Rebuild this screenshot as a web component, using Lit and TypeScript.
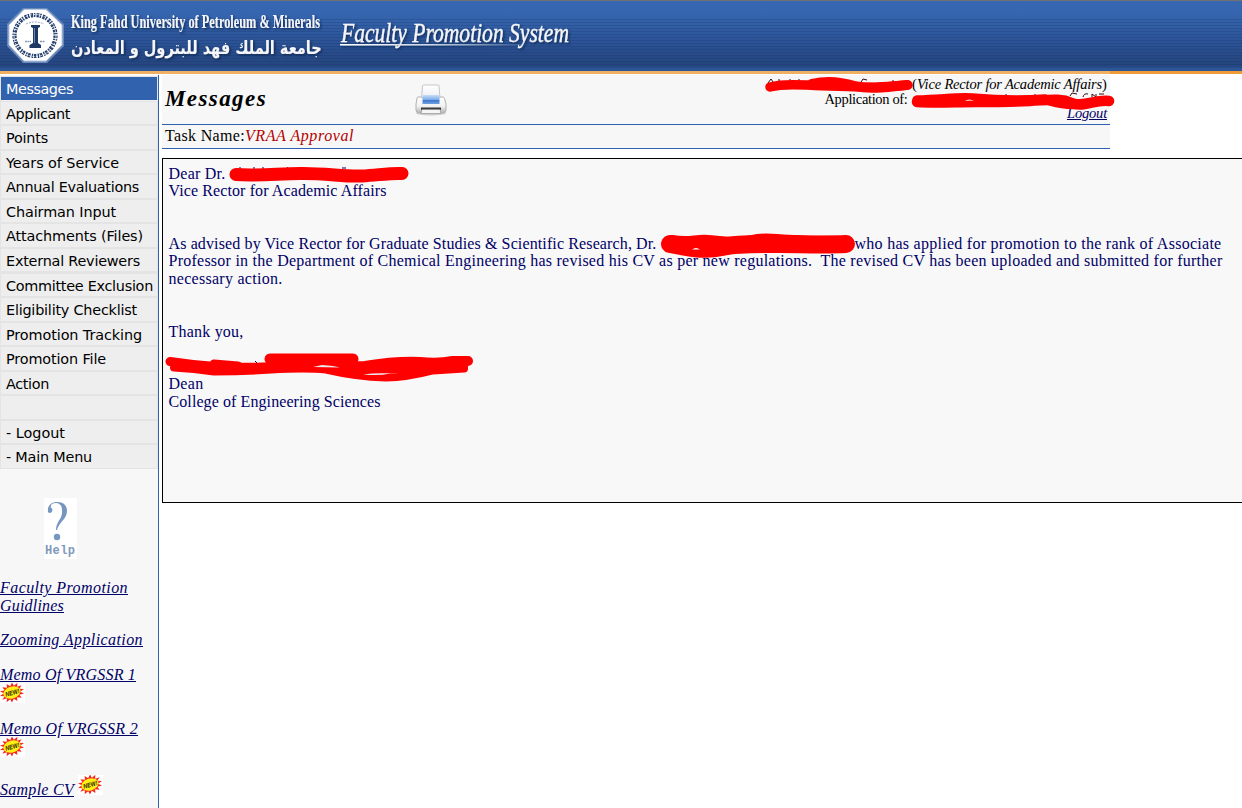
import { LitElement, html, svg, css } from "lit";
import { customElement, property } from "lit/decorators.js";
import { classMap } from "lit/directives/class-map.js";

/** A run of text whose tracking is adjusted so it fills the given width. */
@customElement("fit-text")
class FitText extends LitElement {
  @property() text = "";
  @property({ type: Number }) width = 0;

  static styles = css`
    :host { display: inline-block; white-space: pre; }
    .run { display: inline-block; text-decoration: inherit; }
  `;

  firstUpdated() {
    const run = this.renderRoot.querySelector(".run") as HTMLElement;
    const natural = run.getBoundingClientRect().width;
    run.style.letterSpacing = `${(this.width - natural) / this.text.length}px`;
  }

  render() {
    return html`<span class="run">${this.text}</span>`;
  }
}

const fit = (text: string, width: number) =>
  html`<fit-text .text=${text} .width=${width}></fit-text>`;

const menu: [string, number][] = [
  ["Messages", 67], ["Applicant", 64], ["Points", 42], ["Years of Service", 113],
  ["Annual Evaluations", 133], ["Chairman Input", 110], ["Attachments (Files)", 137],
  ["External Reviewers", 134], ["Committee Exclusion", 147], ["Eligibility Checklist", 131],
  ["Promotion Tracking", 136], ["Promotion File", 100], ["Action", 43], ["", 0],
  ["- Logout", 59], ["- Main Menu", 86],
];

const burst = (() => {
  const pts: string[] = [];
  for (let i = 0; i < 28; i++) {
    const a = (i / 28) * Math.PI * 2;
    const k = i % 2 ? 0.66 : 1;
    pts.push(`${(12 + 12.5 * k * Math.cos(a)).toFixed(1)},${(9.5 + 10 * k * Math.sin(a)).toFixed(1)}`);
  }
  return pts.join(" ");
})();

const newBadge = html`
  <svg class="new" width="25" height="20" viewBox="0 0 25 20">
    <rect width="25" height="20" fill="#fff" />
    <g transform="rotate(-16 12 9.5)">
      <polygon points=${burst} fill="#f5281e" />
      <ellipse cx="12" cy="9.5" rx="8.8" ry="6" fill="#ffee18" />
      <text x="5" y="12" font-size="6.5" font-weight="bold" textLength="14.5"
        lengthAdjust="spacingAndGlyphs" font-family="Liberation Sans, sans-serif" fill="#2a2200">NEW!</text>
    </g>
  </svg>`;

const seal = svg`
  <g>
    <polygon points="23,8 47,8 64,24 64,46 47,63 23,63 7,46 7,24" fill="#6988ba" />
    <polygon points="24,9.500 46,9.500 62,25 62,45 46,61 24,61 9,45 9,25" fill="#fff" stroke="#b9c9e2" stroke-width="1" />
    <circle cx="35" cy="35.500" r="20.500" fill="none" stroke="#26406f" stroke-width="4.200" stroke-dasharray="2.600 .8 1.500 1.200" />
    <circle cx="35" cy="35.500" r="21" fill="none" stroke="#fff" stroke-width=".8" stroke-dasharray="2.300 1.400" />
    <path d="M26 24q9-4 18 0" fill="none" stroke="#9aabc8" stroke-width="1" stroke-dasharray="2 1" />
    <path d="M31 25h9v2l-2 1v15l3 2v3H29.500v-3l3.500-2V28l-2-1z" fill="#1e3865" />
    <path d="M34.500 28v15" stroke="#7188b0" stroke-width="1" />
    <path d="M25 41.500h6M40 41.500h5" stroke="#8497b8" stroke-width="1.500" stroke-dasharray="2 .5" />
  </g>`;

const printer = html`
  <svg class="printer" width="34" height="32" viewBox="0 0 34 32">
    <defs>
      <linearGradient id="paper" x2="0" y2="1"><stop stop-color="#fff" /><stop offset="1" stop-color="#eceff3" /></linearGradient>
      <linearGradient id="body" x2="0" y2="1"><stop stop-color="#fff" /><stop offset=".6" stop-color="#f2f2f2" /><stop offset="1" stop-color="#b4b4b4" /></linearGradient>
      <linearGradient id="glass" x2="0" y2="1"><stop stop-color="#c8ddf7" /><stop offset=".5" stop-color="#80aee9" /><stop offset=".6" stop-color="#3e78cd" /><stop offset="1" stop-color="#70a1e2" /></linearGradient>
    </defs>
    <ellipse cx="17" cy="29" rx="15" ry="2.500" fill="#ccc" />
    <path d="M4 13h25q1 0 1.500 1.500L32 20v6q0 2.500-2.500 2.500h-25Q2 28.500 2 26v-6l1-5.500Q3 13 4 13z" fill="url(#body)" stroke="#b0b0b0" />
    <path d="M8.500 2q0-1 1-1h14.500q1 0 1 1l1 12H7.500z" fill="url(#paper)" stroke="#c2c6ca" />
    <path d="M8.500 11h17v9h-17z" fill="url(#glass)" />
    <path d="M7 23.500h20V26H7z" fill="#3b3b3b" />
    <path d="M8 25.500h18l1 4H7z" fill="#f5f5f5" stroke="#888" stroke-width=".6" />
  </svg>`;

@customElement("app-root")
class AppRoot extends LitElement {
  static styles = css`
    :host {
      display: block; width: 1242px; height: 808px; overflow: hidden; background: #fff;
      font-family: Georgia, "Liberation Serif", serif; font-size: 16px; color: #000;
    }
    .banner {
      height: 71px; box-sizing: border-box; border-top: 1px solid #717171;
      background:
        repeating-linear-gradient(rgba(15, 40, 95, 0) 0 2px, rgba(15, 40, 95, .2) 2px 3px) 0 16px / 100% 52px no-repeat,
        linear-gradient(#3867b1 0, #3565ae 20%, #2b5294 60%, #25457d 93%, #2b5595 95%);
    }
    .banner svg { display: block; margin-top: -1px; }
    .rule { height: 3px; background: linear-gradient(90deg, #efb064 1110px, #ef9b38 1110px); margin-bottom: 1px; }
    .page { display: flex; height: 733px; }
    aside { width: 158px; flex: none; border-right: 1px solid #2f62ae; background: #f7f7f7; }
    .menu {
      margin: 1px 0 0; padding: 0 1px; list-style: none; background: #e4e4e4; height: 393px;
      display: grid; grid-template-rows: repeat(16, 1fr); box-sizing: border-box;
      font: 14.4px/24.8px Verdana, "DejaVu Sans", sans-serif;
    }
    .menu li { border-top: 1px solid #e4e4e4; border-bottom: 1px solid #e4e4e4; background: #eee; padding-left: 5px; height: 22.56px; }
    .menu li.on { background: #3162ae; color: #fff; border-bottom-color: #f0f0f0; }
    .help { display: block; margin: 29px 0 0 44px; }
    .links { display: flex; flex-direction: column; margin-top: 20px; line-height: 18px; font-style: italic; color: #000066; }
    .link { display: flex; flex-direction: column; align-items: flex-start; text-decoration: none; color: inherit; }
    .link fit-text { height: 18px; text-decoration: underline; }
    .link + .link { margin-top: 16px; }
    .link.memo { margin-bottom: 1px; margin-top: 17px; }
    .link.memo + .memo { margin-top: 16px; }
    .link .new { display: block; margin-top: -1px; }
    .link.inline { flex-direction: row; align-items: flex-end; gap: 4px; margin-top: 18px; }
    .link.inline .new { margin-bottom: 4px; }
    main { flex: 1; min-width: 0; padding-left: 3px; }
    .head { width: 948px; height: 49px; background: #f7f7f7; border-bottom: 1px solid #2f62ae; display: flex; position: relative; }
    h1 { margin: 0; padding: 11px 0 0 3px; width: 249px; font: italic bold 23px/26px Georgia, "Liberation Serif", serif; }
    .printer { margin-top: 9px; }
    .user { margin-left: auto; padding: 2px 3px 0 0; font-size: 14.5px; line-height: 14.6px; display: flex; flex-direction: column; align-items: flex-end; }
    .user .second { padding-right: 199.500px; }
    .user a { color: #000066; font-style: italic; }
    .user a fit-text { text-decoration: underline; }
    .task { width: 948px; height: 23px; background: #f7f7f7; border-bottom: 1px solid #2f62ae; line-height: 22px; display: flex; }
    .task fit-text:first-child { margin-left: 3px; }
    .task .value { color: #b30000; font-style: italic; }
    .task .value fit-text { margin-left: 0; }
    .message {
      margin-top: 9px; height: 343px; border: 1px solid #000; border-right: 0; background: #f8f8f8;
      color: #000066; position: relative;
    }
    .letter { padding: 5.6px 0 0 5.5px; display: grid; grid-auto-rows: 17.55px; line-height: 17.55px; white-space: nowrap; }
    .row { display: flex; }
    .after { margin-left: 198px; }
    .ink { position: absolute; left: 0; top: 0; overflow: visible; pointer-events: none; }
  `;

  render() {
    return html`
      <header class="banner">
        <svg width="600" height="71" viewBox="0 0 600 71">
          <defs>
            <filter id="drop" x="-5%" y="-20%" width="110%" height="150%">
              <feDropShadow dx="1.500" dy="1.500" stdDeviation=".8" flood-color="#10264f" flood-opacity=".85" />
            </filter>
            <linearGradient id="fade"><stop stop-color="#fff" /><stop offset=".5" stop-color="#c8d3e6" /><stop offset="1" stop-color="#c8d3e6" stop-opacity="0" /></linearGradient>
          </defs>
          ${seal}
          <g fill="#f4f6fa" filter="url(#drop)">
            <text transform="translate(71 28) scale(.67 1)" font-family="Liberation Serif, serif" font-weight="bold" font-size="18.500" textLength="371.6" lengthAdjust="spacingAndGlyphs">King Fahd University of Petroleum &amp; Minerals</text>
            <text transform="translate(71 54) scale(.85 1)" font-family="DejaVu Sans, sans-serif" font-weight="bold" font-size="18" textLength="295" lengthAdjust="spacingAndGlyphs">جامعة الملك فهد للبترول و المعادن</text>
            <text transform="translate(341 41.5) scale(.82 1)" font-family="Liberation Serif, serif" font-style="italic" font-size="27.500" stroke="#f4f6fa" stroke-width=".3" textLength="278" lengthAdjust="spacingAndGlyphs">Faculty Promotion System</text>
            <rect x="340" y="44" width="185" height="1.500" fill="url(#fade)" />
          </g>
        </svg>
      </header>
      <div class="rule"></div>
      <div class="page">
        <aside>
          <ul class="menu">
            ${menu.map(([t, w], i) => html`<li class=${classMap({ on: i === 0 })}>${t ? fit(t, w) : ""}</li>`)}
          </ul>
          <svg class="help" width="33" height="61" viewBox="0 0 33 61">
            <rect width="33" height="61" fill="#fff" />
            <path d="M4 14C3 7 8 4 13 4c7 0 10 4 10 9 0 8-8 11-10 19h-1c0-9 7-11 6-20C18 7 15 5 12 5c-4 0-6 2-5 5 2 0 2 5-1 5q-1.500 0-2-1z" fill="#7696bf" />
            <circle cx="13" cy="39" r="3.200" fill="#7696bf" />
            <text x="1" y="56" font-family="Liberation Mono, monospace" font-weight="bold" font-size="12" textLength="30" lengthAdjust="spacing" fill="#8099bb">Help</text>
          </svg>
          <nav class="links">
            <a class="link">${fit("Faculty Promotion", 128)}${fit("Guidlines", 64)}</a>
            <a class="link">${fit("Zooming Application", 143)}</a>
            <a class="link memo">${fit("Memo Of VRGSSR 1", 136)}${newBadge}</a>
            <a class="link memo">${fit("Memo Of VRGSSR 2", 138)}${newBadge}</a>
            <a class="link inline">${fit("Sample CV", 74)}${newBadge}</a>
          </nav>
        </aside>
        <main>
          <section class="head">
            <h1>${fit("Messages", 102)}</h1>
            ${printer}
            <div class="user">
              <div>${fit("(", 5)}<i>${fit("Vice Rector for Academic Affairs", 185)}</i>${fit(")", 5)}</div>
              <div class="second">${fit("Application of:", 83)}</div>
              <a>${fit("Logout", 40)}</a>
            </div>
            <svg class="ink" width="960" height="49" viewBox="162 75 960 49">
              <path d="M768 83l3-4 2 3M779 79v3M790 79v3M799 79v3M861 82l2-3 4 1M893 80v2M1006 94v3M1031 95v3M1035 94v3M1070 96l2-3 5 1M1083 97q1-4 5-3M1092 97v-3l4 3v-3M1099 94h5" fill="none" stroke="#320810" stroke-width="1" />
              <g fill="none" stroke="#f00" stroke-linecap="round" stroke-linejoin="round">
                <path d="M770 87C785 83 800 85 815 85.500S845 86 860 87 895 86 908 85" stroke-width="9.500" />
                <path d="M812 84C830 80 842 83 855 86S880 88 907 85" stroke-width="10" />
                <path d="M917 102C935 103 955 102 975 102S1010 102 1030 101 1060 98 1072 103 1095 99 1109 101" stroke-width="10.500" />
                <path d="M917 100C945 99 960 97 972 98S1015 101 1045 99M1050 101Q1068 106 1080 104" stroke-width="9.500" />
              </g>
              <path d="M965 101q4-3 9 0l-4-.6z" fill="#fff" />
            </svg>
          </section>
          <section class="task">${fit("Task Name:", 80)}<span class="value">${fit("VRAA Approval", 109)}</span></section>
          <section class="message">
            <div class="letter">
              <div>${fit("Dear Dr.", 57)}</div>
              <div>${fit("Vice Rector for Academic Affairs", 218)}</div>
              <div></div><div></div>
              <div class="row">${fit("As advised by Vice Rector for Graduate Studies & Scientific Research, Dr.", 488)}<span class="after">${fit("who has applied for promotion to the rank of Associate", 367)}</span></div>
              <div>${fit("Professor in the Department of Chemical Engineering has revised his CV as per new regulations.  The revised CV has been uploaded and submitted for further", 1054)}</div>
              <div>${fit("necessary action.", 114)}</div>
              <div></div><div></div>
              <div>${fit("Thank you,", 75)}</div>
              <div></div><div></div>
              <div>${fit("Dean", 35)}</div>
              <div>${fit("College of Engineering Sciences", 212)}</div>
            </div>
            <svg class="ink" width="900" height="343" viewBox="163 159 900 343">
              <path d="M240 167v3M254 167v3M263 167v3M272 168v2M286 170l2-3M326 168v2M330 168v2M342 168h4M379 179l3 1M395 178l4 1M199 361l2 2M255 361l2 2" stroke="#000066" fill="none" />
              <g fill="none" stroke="#f00" stroke-linecap="round" stroke-linejoin="round">
                <path d="M236 174.500C255 176 275 174 300 173.500S345 177 362 176 390 173 402 173.500" stroke-width="13" />
                <path d="M670 244C690 248 705 251 722 247S760 244 780 244 820 245 846 244" stroke-width="18" />
                <path d="M672 242C690 245 695 241 708 242S735 246 752 242 785 244 846 243" stroke-width="14" />
                <path d="M170 361.500q20 3 40 4.500 30 2 52 1 30-1 48 0" stroke-width="9" />
                <path d="M174 367.500q20 1 40 4 30 0 57-2 35-2 55 0 30 7 60 8 20 0 47-7l31-2" stroke-width="8" />
                <path d="M214 363.500l24 2" stroke-width="8" />
                <path d="M270 359h83" stroke-width="11" />
                <path d="M285 363q40 5 80 3 30-5 55-4 18 2 33-1h15" stroke-width="10" />
                <path d="M330 369q20 1 50 0 25 1 50-1 20-2 34-1" stroke-width="8" />
              </g>
              <path d="M692 249.500q4-3 8 0z" fill="#fff" />
              <path d="M313 367l9-2 11 1 7 1.500zM363 374.500q14-2 27-1-10 2.500-27 1z" fill="#eee8f0" />
            </svg>
          </section>
        </main>
      </div>
    `;
  }
}
